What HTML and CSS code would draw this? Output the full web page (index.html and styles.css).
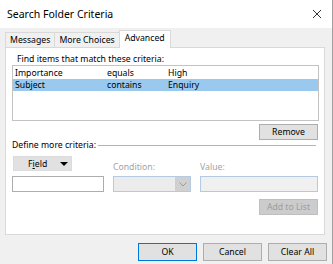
FILE: index.html
```html
<!DOCTYPE html>
<html lang="en">
<head>
<meta charset="UTF-8" />
<title>Search Folder Criteria</title>
<link rel="stylesheet" href="styles.css">
</head>
<body>

  <div class="window">
    <div class="titlebar">
      <span class="title">Search Folder Criteria</span>
      <svg class="close" width="10" height="10" viewBox="0 0 10 10">
        <path d="M1 1 L9 9 M9 1 L1 9" stroke="#333" stroke-width="1" fill="none" />
      </svg>
    </div>

    <div class="client">
      <div class="tabs">
        <div class="tab">Messages</div>
        <div class="tab">More Choices</div>
        <div class="tab active">Advanced</div>
      </div>

      <div class="panel">
        <div class="find-label">Find items that match these criteria:</div>
        <div class="list">
          <div class="row">
            <span>Importance</span><span>equals</span><span>High</span>
          </div>
          <div class="row selected">
            <span>Subject</span><span>contains</span><span>Enquiry</span>
          </div>
        </div>

        <div class="actions">
          <button class="btn">Remove</button>
        </div>

        <div class="group-title"><span>Define more criteria:</span></div>

        <div class="criteria">
          <button class="field-btn">F<u>i</u>eld <span class="arrow"></span></button>
          <div class="label">Condition:</div>
          <div class="label">Value:</div>
          <input class="text-input" type="text" />
          <div class="combo">
            <span class="combo-btn">
              <svg width="8" height="5" viewBox="0 0 8 5">
                <path d="M0.5 0.5 L4 4 L7.5 0.5" stroke="#9a9a9a" fill="none" />
              </svg>
            </span>
          </div>
          <input class="text-input disabled" type="text" disabled />
        </div>

        <div class="actions add">
          <button class="btn" disabled>Add to List</button>
        </div>
      </div>

      <div class="footer">
        <button class="btn big default">OK</button>
        <button class="btn big">Cancel</button>
        <button class="btn big">Clear All</button>
      </div>
    </div>
  </div>

</body>
</html>
```

FILE: styles.css
```css
body {
  margin: 0;
  font-family: 'Noto Sans', 'Open Sans', sans-serif;
  font-size: 8.7px;
  color: #000;
  background: #f0f0f0;
}
.window {
  width: 333px;
  height: 264px;
  box-sizing: border-box;
  border-right: 1px solid #a0a0a0;
  display: flex;
  flex-direction: column;
}
.titlebar {
  height: 28px;
  flex: none;
  background: #fff;
  display: flex;
  align-items: center;
  justify-content: space-between;
  padding: 0 10px 0 7px;
}
.title {
  font-size: 10.5px;
}
.client {
  flex: 1;
  padding: 2px 5px 0 5px;
}
.tabs {
  display: flex;
  align-items: flex-end;
  height: 17px;
}
.tab {
  height: 15px;
  line-height: 14px;
  padding: 0 4px;
  box-sizing: border-box;
  border: 1px solid #d9d9d9;
  border-bottom: none;
  margin-right: -1px;
  background: #f0f0f0;
}
.tab.active {
  position: relative;
  height: 18px;
  line-height: 15px;
  margin-bottom: -1px;
  background: #fff;
  padding: 0 5px;
}
.panel {
  width: 320px;
  height: 188px;
  box-sizing: border-box;
  background: #fff;
  border: 1px solid #d9d9d9;
  padding: 6px 5px 0 6px;
}
.find-label {
  line-height: 11px;
  padding-left: 5px;
}
.list {
  height: 56px;
  box-sizing: border-box;
  border: 1px solid #c3c3c3;
  padding-top: 1px;
}
.row {
  display: grid;
  grid-template-columns: 92px 61px 1fr;
  height: 12px;
  line-height: 12px;
  padding-left: 2px;
}
.row.selected {
  background: #99c9ef;
}
.actions {
  display: flex;
  justify-content: flex-end;
  padding-right: 1px;
  margin-top: 3px;
}
.actions.add {
  margin-top: 7px;
}
.btn {
  font: inherit;
  width: 59px;
  height: 16px;
  padding: 0;
  background: #e1e1e1;
  border: 1px solid #adadad;
  color: #000;
}
.btn:disabled {
  background: #cccccc;
  border-color: #bfbfbf;
  color: #9d9d9d;
}
.group-title {
  display: flex;
  align-items: center;
  height: 10px;
  line-height: 10px;
  padding-right: 3px;
}
.group-title::after {
  content: '';
  flex: 1;
  border-top: 1px solid #b4b4b4;
  margin-left: 2px;
}
.criteria {
  display: grid;
  grid-template-columns: 92px 78px 118px;
  column-gap: 9px;
  row-gap: 5px;
  margin-top: 6px;
}
.field-btn {
  font: inherit;
  width: 59px;
  height: 15px;
  margin-left: 1px;
  padding: 0 3px 0 14px;
  display: flex;
  align-items: center;
  background: #e1e1e1;
  border: 1px solid #dcdcdc;
  color: #000;
}
.arrow {
  margin-left: auto;
  width: 0;
  height: 0;
  border-left: 4px solid transparent;
  border-right: 4px solid transparent;
  border-top: 4px solid #000;
}
.label {
  align-self: end;
  line-height: 10px;
  margin-bottom: -1px;
  color: #a3a3a3;
}
.text-input {
  height: 16px;
  box-sizing: border-box;
  margin: 0;
  border: 1px solid #adadad;
  background: #fff;
}
.text-input.disabled {
  background: #f0f0f0;
  border-color: #b4c9e2;
}
.combo {
  height: 16px;
  box-sizing: border-box;
  border: 1px solid #b4c9e2;
  background: #ececec;
  display: flex;
  justify-content: flex-end;
}
.combo-btn {
  width: 15px;
  background: #d0d0d0;
  display: flex;
  align-items: center;
  justify-content: center;
}
.footer {
  display: flex;
  justify-content: flex-end;
  gap: 6px;
  margin-top: 8px;
}
.btn.big {
  height: 18px;
}
.btn.default {
  border-color: #0078d7;
}
```
